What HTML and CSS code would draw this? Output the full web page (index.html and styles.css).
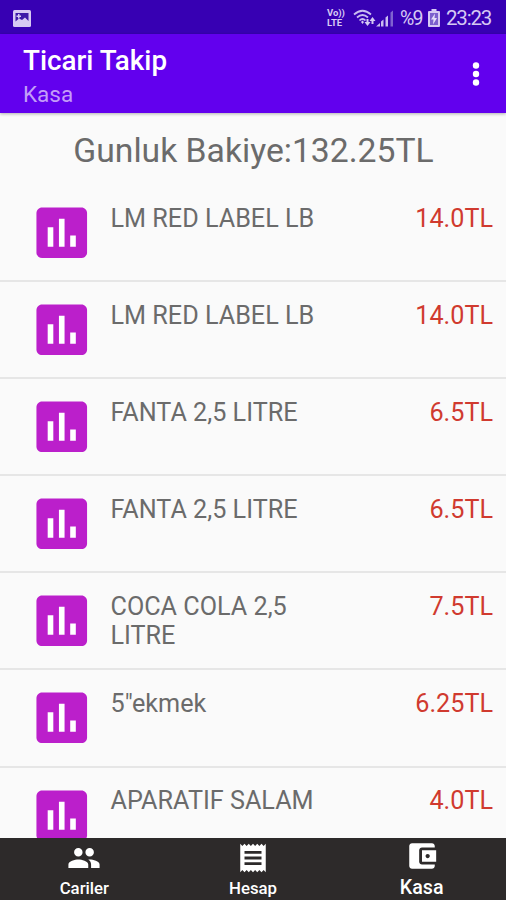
FILE: index.html
```html
<!DOCTYPE html>
<html lang="tr">
<head>
    <meta charset="UTF-8">
    <meta name="viewport" content="width=device-width, initial-scale=1.0">
    <title>Ticari Takip</title>
    <link rel="stylesheet" href="styles.css">
</head>
<body>
    <!-- shared icon for the list rows -->
    <svg class="defs">
        <symbol id="chart" viewBox="0 0 24 24">
            <path d="M19 3H5c-1.1 0-2 .9-2 2v14c0 1.1.9 2 2 2h14c1.1 0 2-.9 2-2V5c0-1.1-.9-2-2-2z" fill="#bb1fcb"/>
            <path d="M7 10h2v7H7zM11 7h2v10h-2zM15 13h2v4h-2z" fill="#fff"/>
        </symbol>
    </svg>

    <div class="screen">
        <div class="statusbar">
            <svg class="picture" width="18" height="17" viewBox="0 0 18 17">
                <path d="M1.500 0h15q1.500 0 1.500 1.500v14q0 1.500-1.500 1.500h-15Q0 17 0 15.500v-14Q0 0 1.500 0z" fill="#d6c9f3"/>
                <path d="M2.500 3h13v8l-3.500-3.500-3 2.500-3-1.500-3.500 3z" fill="#3c1aa8"/>
                <path d="M3.500 5.500h1.500V4h1.500v1.500H8V7H6.500v1.500H5V7H3.500z" fill="#d6c9f3"/>
            </svg>
            <div class="status-right">
                <div class="volte"><span>Vo))</span><span>LTE</span></div>
                <svg class="wifi" width="24" height="18" viewBox="0 0 24 18">
                    <g fill="none" stroke="#cabcf0" stroke-width="1.7">
                        <path d="M1 5.500Q9.500-2 18 5.500"/>
                        <path d="M4 8.500Q9.500 3.500 15 8.500"/>
                        <path d="M6.500 11.500Q9.500 8.500 12.500 11.500"/>
                    </g>
                    <path d="M8 13l1.500-1.500L11 13l-1.500 2zM11.500 13h2v-3h2v3h2l-3 4zM16.500 12l3-4 3 4h-2v3h-2v-3z" fill="#d6c9f3"/>
                </svg>
                <svg class="signal" width="18" height="17" viewBox="0 0 18 17">
                    <path d="M0 16.500l4-3.500v3.500zM5 11.500l2.500-2v7H5zM9.500 7.500L12 5.500v11H9.500z" fill="#cabcf0"/>
                    <path d="M14.500 2.500L17 .5v16h-2.500z" fill="#7f62d0"/>
                </svg>
                <span class="percent">%9</span>
                <svg class="battery" width="12" height="18" viewBox="0 0 12 18">
                    <path d="M3.500 0h5v2H11q1 0 1 1v14q0 1-1 1H1q-1 0-1-1V3q0-1 1-1h2.500z" fill="#d6c9f3"/>
                    <path d="M2 4h8v12H2z" fill="#7c60cd"/>
                    <path d="M7 4.500L3 10.500h2.500L5 15.500l4-6.500H6.500z" fill="#e6defa"/>
                </svg>
                <span class="clock">23:23</span>
            </div>
        </div>

        <div class="toolbar">
            <div class="titles">
                <div class="title">Ticari Takip</div>
                <div class="subtitle">Kasa</div>
            </div>
            <svg width="8" height="24" viewBox="0 0 8 24" fill="#fff">
                <circle cx="4" cy="3.500" r="3.200"/>
                <circle cx="4" cy="12" r="3.200"/>
                <circle cx="4" cy="20.500" r="3.200"/>
            </svg>
        </div>

        <div class="content">
            <div class="balance">Gunluk Bakiye:132.25TL</div>
            <div class="row">
                <svg class="row-icon"><use href="#chart"/></svg>
                <div class="name">LM RED LABEL LB</div>
                <div class="price">14.0TL</div>
            </div>
            <div class="row">
                <svg class="row-icon"><use href="#chart"/></svg>
                <div class="name">LM RED LABEL LB</div>
                <div class="price">14.0TL</div>
            </div>
            <div class="row">
                <svg class="row-icon"><use href="#chart"/></svg>
                <div class="name">FANTA 2,5 LITRE</div>
                <div class="price">6.5TL</div>
            </div>
            <div class="row">
                <svg class="row-icon"><use href="#chart"/></svg>
                <div class="name">FANTA 2,5 LITRE</div>
                <div class="price">6.5TL</div>
            </div>
            <div class="row">
                <svg class="row-icon"><use href="#chart"/></svg>
                <div class="name">COCA COLA 2,5 LITRE</div>
                <div class="price">7.5TL</div>
            </div>
            <div class="row">
                <svg class="row-icon"><use href="#chart"/></svg>
                <div class="name">5"ekmek</div>
                <div class="price">6.25TL</div>
            </div>
            <div class="row">
                <svg class="row-icon"><use href="#chart"/></svg>
                <div class="name">APARATIF SALAM</div>
                <div class="price">4.0TL</div>
            </div>
        </div>

        <div class="bottom-nav">
            <div class="tab">
                <svg width="34" height="34" viewBox="0 0 24 24" fill="#fff">
                    <path d="M16 11c1.660 0 2.990-1.340 2.990-3S17.660 5 16 5c-1.660 0-3 1.340-3 3s1.340 3 3 3zm-8 0c1.660 0 2.990-1.340 2.990-3S9.660 5 8 5C6.340 5 5 6.340 5 8s1.340 3 3 3zm0 2c-2.330 0-7 1.170-7 3.500V19h14v-2.500c0-2.330-4.670-3.500-7-3.500zm8 0c-.290 0-.620.020-.970.050 1.160.840 1.970 1.970 1.970 3.450V19h6v-2.500c0-2.330-4.670-3.500-7-3.500z"/>
                </svg>
                <span>Cariler</span>
            </div>
            <div class="tab">
                <svg width="34" height="34" viewBox="0 0 24 24" fill="#fff">
                    <path d="M18 17H6v-2h12v2zm0-4H6v-2h12v2zm0-4H6V7h12v2zM3 22l1.500-1.500L6 22l1.500-1.500L9 22l1.500-1.500L12 22l1.500-1.500L15 22l1.500-1.500L18 22l1.500-1.500L21 22V2l-1.500 1.500L18 2l-1.500 1.500L15 2l-1.500 1.500L12 2l-1.500 1.500L9 2 7.500 3.500 6 2 4.500 3.500 3 2v20z"/>
                </svg>
                <span>Hesap</span>
            </div>
            <div class="tab active">
                <svg width="34" height="34" viewBox="0 0 24 24" fill="#fff">
                    <path d="M21 18v1c0 1.100-.9 2-2 2H5c-1.110 0-2-.9-2-2V5c0-1.100.890-2 2-2h14c1.100 0 2 .9 2 2v1h-9c-1.110 0-2 .9-2 2v8c0 1.100.890 2 2 2h9zm-9-2h10V8H12v8zm4-2.500c-.830 0-1.500-.670-1.500-1.500s.670-1.500 1.500-1.500 1.500.670 1.500 1.500-.670 1.500-1.500 1.500z"/>
                </svg>
                <span>Kasa</span>
            </div>
        </div>
    </div>
</body>
</html>
```

FILE: styles.css
```css
body {
    margin: 0;
    font-family: Roboto, "Liberation Sans", sans-serif;
    background-color: #fafafa;
}
.defs {
    display: none;
}
.screen {
    display: flex;
    flex-direction: column;
    height: 900px;
    overflow: hidden;
}
svg {
    display: block;
    flex-shrink: 0;
}

/* Status bar */
.statusbar {
    display: flex;
    justify-content: space-between;
    align-items: center;
    flex: 0 0 34px;
    box-sizing: border-box;
    padding: 2px 13px 0 13px;
    background-color: #3700b3;
    color: #d6c9f3;
}
.status-right {
    display: flex;
    align-items: center;
}
.volte {
    display: flex;
    flex-direction: column;
    width: 18px;
    margin-right: 8px;
    font-size: 9.5px;
    line-height: 10px;
    font-weight: 700;
    letter-spacing: -0.1px;
}
.wifi {
    margin-right: -1px;
}
.signal {
    margin-right: 6px;
}
.percent {
    width: 22px;
    margin-right: 6px;
    font-size: 19.5px;
    letter-spacing: -1.8px;
}
.battery {
    margin-right: 6px;
}
.clock {
    width: 47px;
    font-size: 20.5px;
    letter-spacing: -1.2px;
}

/* App bar */
.toolbar {
    display: flex;
    justify-content: space-between;
    align-items: center;
    flex: 0 0 79px;
    box-sizing: border-box;
    padding: 0 26px 0 23px;
    background-color: #6200ee;
    box-shadow: 0 1px 3px rgba(0, 0, 0, 0.3);
    color: #fff;
    z-index: 1;
}
.titles {
    padding-top: 7px;
}
.title {
    font-size: 27.8px;
    line-height: 33px;
    font-weight: 500;
}
.subtitle {
    font-size: 22.5px;
    line-height: 34px;
    color: #c39df8;
}

/* List */
.content {
    flex: 1;
    overflow: hidden;
    color: #6b6b6b;
}
.balance {
    height: 72px;
    line-height: 76px;
    font-size: 33.7px;
    text-align: center;
    text-indent: 1px;
}
.row {
    display: flex;
    box-sizing: border-box;
    height: 97.1px;
    padding: 14px 13px 0 28px;
    border-bottom: 2px solid #e6e6e6;
    font-size: 25.2px;
    line-height: 29.5px;
}
.row-icon {
    width: 67.5px;
    height: 67.5px;
    margin-right: 15px;
}
.name {
    width: 220px;
    padding-top: 4.5px;
}
.price {
    margin-left: auto;
    padding-top: 4.5px;
    color: #d03a2f;
}

/* Bottom navigation */
.bottom-nav {
    display: flex;
    flex: 0 0 62px;
    background-color: #2d2a2a;
    color: #fff;
}
.tab {
    display: flex;
    flex: 1;
    flex-direction: column;
    align-items: center;
    padding-top: 3px;
    font-size: 16.8px;
    font-weight: 500;
    line-height: 20px;
}
.tab span {
    margin-top: 3px;
}
.tab.active {
    padding-top: 1px;
    font-size: 19.7px;
}
.tab.active span {
    margin-top: 5px;
}
```
